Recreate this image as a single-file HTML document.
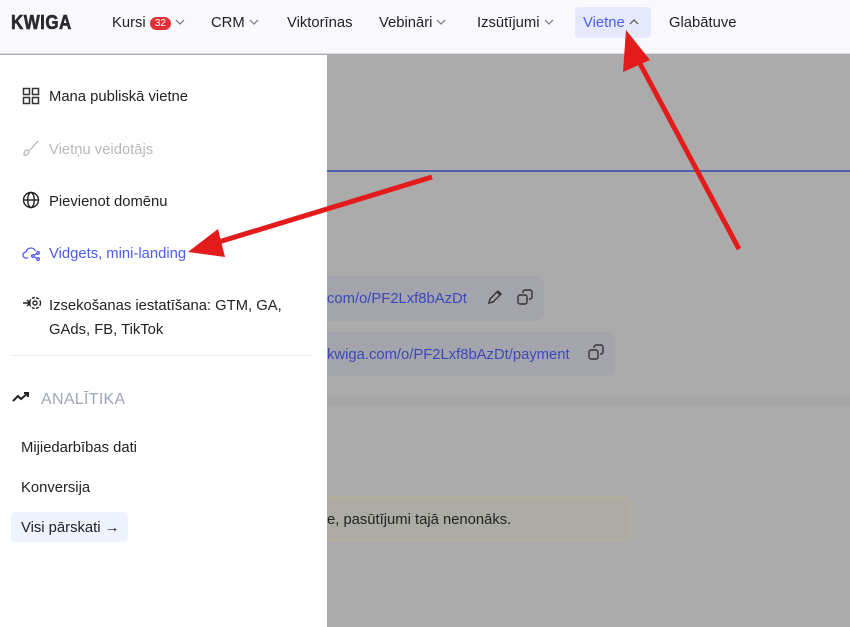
<!DOCTYPE html>
<html><head><meta charset="utf-8"><style>
*{margin:0;padding:0;box-sizing:border-box}
body{width:850px;height:627px;overflow:hidden;background:#ababab;font-family:"Liberation Sans",sans-serif;position:relative;color:#1f1f24}
.nav{position:absolute;left:0;top:0;width:850px;height:54px;background:#f9f9fd;border-bottom:1px solid #dcdce4}
.nav span{position:absolute;top:15px;font-size:14.8px;white-space:nowrap}
.logo{position:absolute;left:11px;top:12px;font-weight:bold;font-size:20px;color:#2a2a2e;transform:scaleX(.85);transform-origin:left;letter-spacing:.5px;-webkit-text-stroke:.6px #2a2a2e}
.badge{display:inline-block;background:#e0313a;color:#fff;font-size:10px;border-radius:8px;padding:1px 5px;vertical-align:1px;font-style:normal}
.cv{display:inline-block;vertical-align:2px;margin-left:4px}
.active{position:absolute;left:575px;top:7px;width:76px;height:31px;background:#e6e8fc;border-radius:4px}
.menu{position:absolute;left:0;top:55px;width:327px;height:572px;background:#fff}
.it{position:absolute;left:49px;font-size:14.8px;color:#222}
.ic{position:absolute;left:22px}
.card{position:absolute;background:#a3a4ac;border-radius:8px}
.link{position:absolute;color:#3b49b8;font-size:14.8px}
</style></head><body>
<div class="nav">
<div class="logo">KWIGA</div>
<span style="left:112px">Kursi <i class="badge">32</i><svg class="cv" width="10" height="6" fill="none" stroke="#777" stroke-width="1.2"><path d="M1 1l4 4 4-4"/></svg></span>
<span style="left:211px">CRM<svg class="cv" width="10" height="6" fill="none" stroke="#777" stroke-width="1.2"><path d="M1 1l4 4 4-4"/></svg></span>
<span style="left:287px">Viktorīnas</span>
<span style="left:379px">Vebināri<svg class="cv" width="10" height="6" fill="none" stroke="#777" stroke-width="1.2"><path d="M1 1l4 4 4-4"/></svg></span>
<span style="left:477px">Izsūtījumi<svg class="cv" width="10" height="6" fill="none" stroke="#777" stroke-width="1.2"><path d="M1 1l4 4 4-4"/></svg></span>
<div class="active"></div>
<span style="left:583px;color:#4d5bef">Vietne<svg class="cv" width="10" height="6" fill="none" stroke="#555" stroke-width="1.2"><path d="M1 5l4-4 4 4"/></svg></span>
<span style="left:669px">Glabātuve</span>
</div>
<div style="position:absolute;left:327px;top:170px;width:523px;height:2px;background:#4d5fae"></div>
<div class="card" style="left:300px;top:276px;width:244px;height:45px"></div>
<div class="link" style="left:327px;top:291px">com/o/PF2Lxf8bAzDt</div>
<svg style="position:absolute;left:486px;top:288px" width="18" height="18" fill="none" stroke="#333" stroke-width="1.4"><path d="M3 15l1-4 8-8 3 3-8 8z M11 4l3 3"/></svg>
<svg style="position:absolute;left:516px;top:288px" width="18" height="18" fill="none" stroke="#333" stroke-width="1.4"><rect x="2" y="7" width="9" height="9" rx="2"/><path d="M7 5V4a2 2 0 012-2h5a2 2 0 012 2v5a2 2 0 01-2 2h-1"/></svg>
<div class="card" style="left:300px;top:332px;width:315px;height:44px"></div>
<div class="link" style="left:327px;top:347px">kwiga.com/o/PF2Lxf8bAzDt/payment</div>
<svg style="position:absolute;left:587px;top:343px" width="18" height="18" fill="none" stroke="#333" stroke-width="1.4"><rect x="2" y="7" width="9" height="9" rx="2"/><path d="M7 5V4a2 2 0 012-2h5a2 2 0 012 2v5a2 2 0 01-2 2h-1"/></svg>
<div style="position:absolute;left:327px;top:396px;width:523px;height:10px;background:#a6a6a6"></div>
<div style="position:absolute;left:300px;top:497px;width:331px;height:44px;border:1px solid #b8b48e;border-radius:8px;background:#acaba4"></div>
<div style="position:absolute;left:327px;top:512px;font-size:14.8px;color:#222">e, pasūtījumi tajā nenonāks.</div>
<div class="menu"></div>
<svg class="ic" style="top:87px" width="18" height="18" fill="none" stroke="#333" stroke-width="1.5"><rect x="1.5" y="1.5" width="6" height="6"/><rect x="10.5" y="1.5" width="6" height="6"/><rect x="1.5" y="10.5" width="6" height="6"/><rect x="10.5" y="10.5" width="6" height="6"/></svg>
<div class="it" style="top:89px">Mana publiskā vietne</div>
<svg class="ic" style="top:139px" width="18" height="18" fill="none" stroke="#bbb" stroke-width="1.4"><path d="M16 2l-8 9 M2 16c0-3 1-5 3-5s3 2 1 4-4 1-4 1z"/></svg>
<div class="it" style="top:142px;color:#b8b8b8">Vietņu veidotājs</div>
<svg class="ic" style="top:191px" width="18" height="18" fill="none" stroke="#222" stroke-width="1.4"><circle cx="9" cy="9" r="7.5"/><ellipse cx="9" cy="9" rx="3.3" ry="7.5"/><path d="M1.5 9h15"/></svg>
<div class="it" style="top:194px">Pievienot domēnu</div>
<svg class="ic" style="top:243px" width="18" height="18" fill="none" stroke="#4d5bef" stroke-width="1.3"><path d="M6 15H4a3 3 0 010-6 5 5 0 019.5-1"/><circle cx="11" cy="13" r="1.3"/><circle cx="16" cy="10" r="1.3"/><circle cx="16" cy="16" r="1.3"/><path d="M12 12.5l3-2 M12 13.5l3 2"/></svg>
<div class="it" style="top:246px;color:#4d5bef">Vidgets, mini-landing</div>
<svg class="ic" style="top:294px" width="20" height="18" fill="none" stroke="#222" stroke-width="1.4"><path d="M1 9h7 M5 6l3 3-3 3"/><circle cx="13" cy="9" r="2"/><circle cx="13" cy="9" r="5.5" stroke-dasharray="3 1.5"/></svg>
<div class="it" style="top:294px;line-height:24px">Izsekošanas iestatīšana: GTM, GA,<br>GAds, FB, TikTok</div>
<div style="position:absolute;left:11px;top:355px;width:301px;height:1px;background:#eee"></div>
<svg style="position:absolute;left:12px;top:390px" width="20" height="14" fill="none" stroke="#222" stroke-width="2"><path d="M1 11l5-5 3 3 7-6 M12 3h4v4"/></svg>
<div style="position:absolute;left:41px;top:391px;font-size:16px;color:#a0a5b8;letter-spacing:.3px">ANALĪTIKA</div>
<div style="position:absolute;left:21px;top:440px;font-size:14.8px">Mijiedarbības dati</div>
<div style="position:absolute;left:21px;top:480px;font-size:14.8px">Konversija</div>
<div style="position:absolute;left:11px;top:512px;width:117px;height:30px;background:#eef3fd;border-radius:4px"></div>
<div style="position:absolute;left:21px;top:520px;font-size:14.8px">Visi pārskati →</div>
<svg style="position:absolute;left:0;top:0" width="850" height="627">
<path d="M432 177L212 244" stroke="#e31b1b" stroke-width="5"/>
<polygon points="188,252 218,229 225,257" fill="#e31b1b"/>
<path d="M739 249L637 58" stroke="#e31b1b" stroke-width="5"/>
<polygon points="626,30 650,60 623,72" fill="#e31b1b"/>
</svg>
</body></html>
